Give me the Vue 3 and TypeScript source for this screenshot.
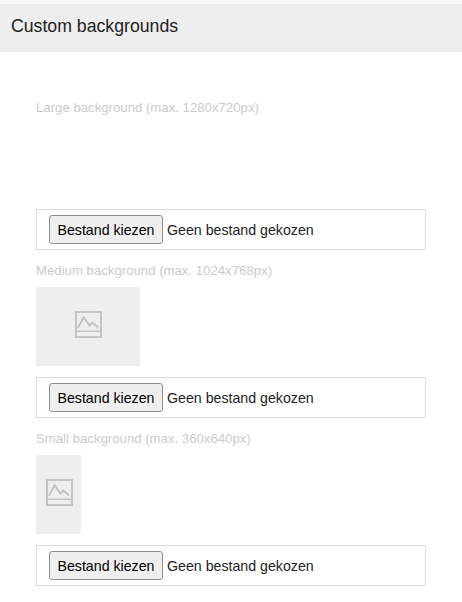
<script setup lang="ts">
interface Item { label: string; w: number; h: number; hasThumb: boolean }
const items: Item[] = [
  { label: 'Large background (max. 1280x720px)', w: 0, h: 0, hasThumb: false },
  { label: 'Medium background (max. 1024x768px)', w: 104, h: 79, hasThumb: true },
  { label: 'Small background (max. 360x640px)', w: 45, h: 79, hasThumb: true },
]
</script>

<template>
  <div class="page">
    <h2 class="title">Custom backgrounds</h2>
    <div class="list">
      <section v-for="(it, i) in items" :key="i" class="item" :class="{ first: i === 0 }">
        <div class="label">{{ it.label }}</div>
        <div v-if="it.hasThumb" class="thumb" :style="{ width: it.w + 'px', height: it.h + 'px' }">
          <svg width="27" height="27" viewBox="0 0 28 28" fill="none" stroke="#c2c2c2" stroke-width="2">
            <rect x="1" y="1" width="26" height="26" />
            <path d="M1 21H27" stroke-width="1.6" />
            <path d="M3 17.5L9 6.5L15 15L18 12L24 17" stroke-width="2" />
          </svg>
        </div>
        <div v-else class="spacer"></div>
        <div class="file">
          <button class="btn" type="button">Bestand kiezen</button>
          <span class="none">Geen bestand gekozen</span>
        </div>
      </section>
    </div>
  </div>
</template>

<style>
html, body { margin: 0; background: #fff; }
</style>

<style scoped>
.page {
  width: 462px;
  height: 602px;
  overflow: hidden;
  padding-top: 4px;
  box-sizing: border-box;
  background: linear-gradient(#f9f9f9 4px, #fff 4px);
  font-family: "Liberation Sans", Arial, sans-serif;
}
.title {
  margin: 0;
  height: 48px;
  line-height: 44px;
  padding-left: 11px;
  background: #eee;
  font-size: 17.7px;
  font-weight: 400;
  color: #222;
}
.list {
  padding: 0 36px;
  width: 390px;
}
.item { padding-top: 13px; }
.item.first { padding-top: 48px; }
.label {
  font-size: 13.2px;
  line-height: 16px;
  color: #cbcbcb;
  margin-bottom: 8px;
}
.spacer { height: 85px; }
.thumb {
  background: #eee;
  display: flex;
  align-items: center;
  justify-content: center;
  box-sizing: border-box;
  padding: 0 0 5px 1px;
  margin-bottom: 11px;
}
.file {
  height: 41px;
  box-sizing: border-box;
  border: 1px solid #dcdcdc;
  display: flex;
  align-items: center;
  padding-left: 12px;
  gap: 4px;
  font-size: 14.2px;
  color: #222;
}
.btn {
  width: 114px;
  height: 29px;
  padding: 0;
  box-sizing: border-box;
  border: 1px solid #8f8f8f;
  border-radius: 3px;
  background: #efefef;
  font: inherit;
  color: #000;
}
.none { white-space: nowrap; }
</style>
